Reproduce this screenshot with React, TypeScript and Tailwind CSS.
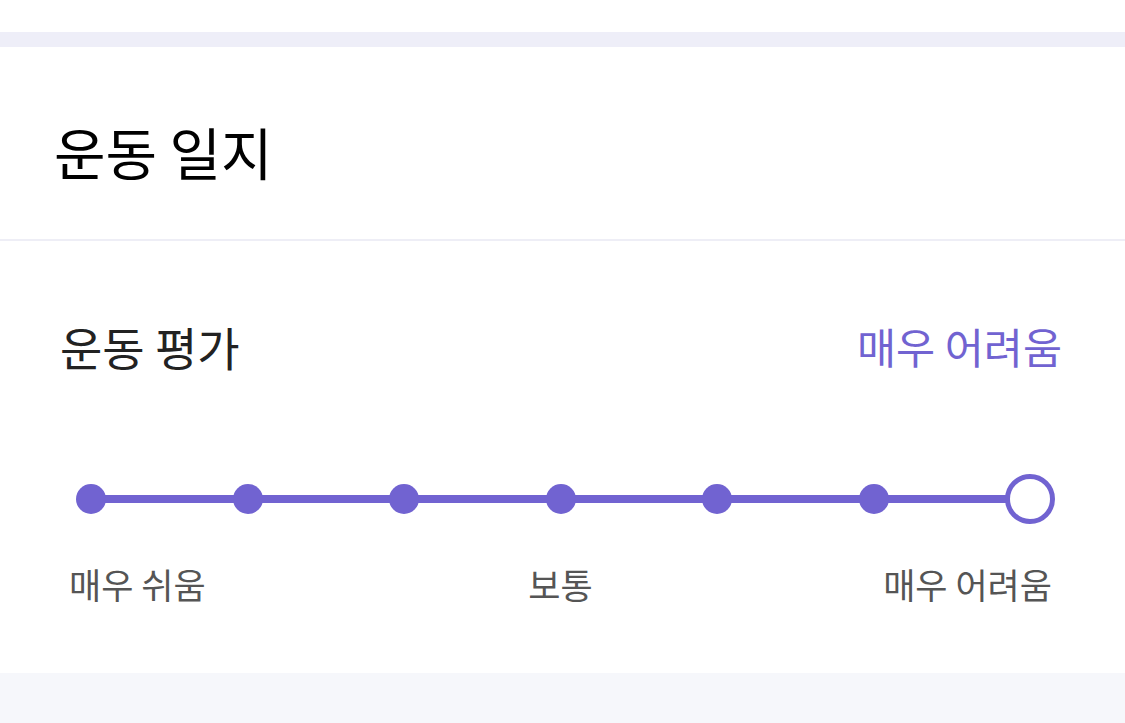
import React from "react";

const PURPLE = "#7163d1";

export default function App() {
  const steps = [0, 1, 2, 3, 4, 5, 6];
  const selected = 6;
  return (
    <div
      className="w-[1125px] h-[723px] bg-[#f6f7fb] flex flex-col overflow-hidden"
      style={{ fontFamily: '"Noto Sans CJK KR", "Noto Sans", sans-serif' }}
    >
      <div className="h-[32px] bg-white" />
      <div className="h-[15px] bg-[#eeeef8]" />
      <div className="h-[192px] bg-white flex items-start pt-[76px] pl-[54px]">
        <h1 className="text-[56px] leading-none text-black font-normal">운동 일지</h1>
      </div>
      <div className="h-[2px] bg-[#eeeef6]" />
      <div className="bg-white h-[432px] flex flex-col">
        <div className="flex justify-between items-center mt-[82px] h-[46px] pl-[60px] pr-[63px]">
          <span className="text-[46px] leading-none text-[#222222]">운동 평가</span>
          <span className="text-[42.5px] leading-none" style={{ color: PURPLE }}>
            매우 어려움
          </span>
        </div>
        <div className="mt-[105px] h-[50px] ml-[66px] mr-[70px] relative flex items-center justify-between">
          <div className="absolute left-[25px] right-[25px] top-[21px] h-[8px] bg-[#7163d1]" />
          {steps.map((s) => (
            <div key={s} className="relative w-[50px] h-[50px] flex items-center justify-center">
              {s === selected ? (
                <div className="w-[50px] h-[50px] rounded-full border-[5px] border-[#7163d1] bg-white" />
              ) : (
                <div className="w-[30px] h-[30px] rounded-full bg-[#7163d1]" />
              )}
            </div>
          ))}
        </div>
        <div className="mt-[42px] grid grid-cols-3 items-center text-[35px] leading-none text-[#555555] pl-[69px] pr-[73px]">
          <span className="text-left">매우 쉬움</span>
          <span className="text-center">보통</span>
          <span className="text-right">매우 어려움</span>
        </div>
      </div>
    </div>
  );
}
